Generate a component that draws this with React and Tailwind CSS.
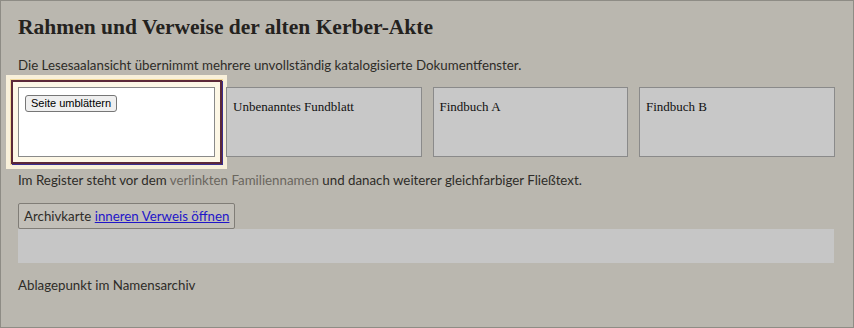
import React from 'react';

const frames = ['Unbenanntes Fundblatt', 'Findbuch A', 'Findbuch B'];

export default function App() {
  return (
    <div className="h-[328px] w-[854px] overflow-hidden bg-[#bab7af] border border-[#8e8c85] font-['Lato','Open_Sans',sans-serif] text-[#2e2c28]">
      <div className="px-[17px] pt-[12px]">
        <h1 className="font-['Liberation_Serif',serif] font-bold text-[21.5px] leading-[28px] text-[#24221e]">
          Rahmen und Verweise der alten Kerber-Akte
        </h1>
        <p className="mt-[14px] text-[13.3px] leading-[20px]">
          Die Lesesaalansicht übernimmt mehrere unvollständig katalogisierte Dokumentfenster.
        </p>

        {/* document windows, first one has focus */}
        <div className="mt-[12px] flex gap-[11px]">
          <div className="flex items-start w-[197px] h-[70px] shrink-0 bg-white border border-[#8a8a8a] px-[6px] pt-[7px] shadow-[0_0_0_5px_#fdf7e6,0_0_0_7px_#5c2838,1px_1px_0_7px_#3b2f8f,0_0_0_8px_#f1d99a,0_0_0_12px_#f8f0da]">
            <button className="h-[17px] px-[5px] rounded-[3px] border border-[#767676] bg-[#efefef] text-[11px] leading-[15px] text-black font-['Liberation_Sans',Arial,sans-serif]">
              Seite umblättern
            </button>
          </div>
          {frames.map(name => (
            <div
              key={name}
              className="w-[195.5px] h-[70px] shrink-0 bg-[#c8c8c8] border border-[#8a8a8a] px-[6px] pt-[11px] font-['Liberation_Serif',serif] text-[13px] leading-[16px] text-[#111]"
            >
              {name}
            </div>
          ))}
        </div>

        <p className="mt-[13px] text-[13.3px] leading-[20px]">
          Im Register steht vor dem <a className="text-[#6a665e]">verlinkten Familiennamen</a> und danach weiterer gleichfarbiger Fließtext.
        </p>

        <div className="mt-[13px] flex">
          <button className="h-[26px] px-[5px] rounded-[2px] border border-[#807d77] bg-[#c2bfb8] text-[13.3px] leading-[20px] text-[#2e2c28]">
            Archivkarte <span className="text-[#1f16c9] underline">inneren Verweis öffnen</span>
          </button>
        </div>
        <div className="h-[34px] w-[816px] bg-[#c6c6c6]"></div>

        <p className="mt-[12px] text-[13.3px] leading-[20px]">Ablagepunkt im Namensarchiv</p>
      </div>
    </div>
  );
}
